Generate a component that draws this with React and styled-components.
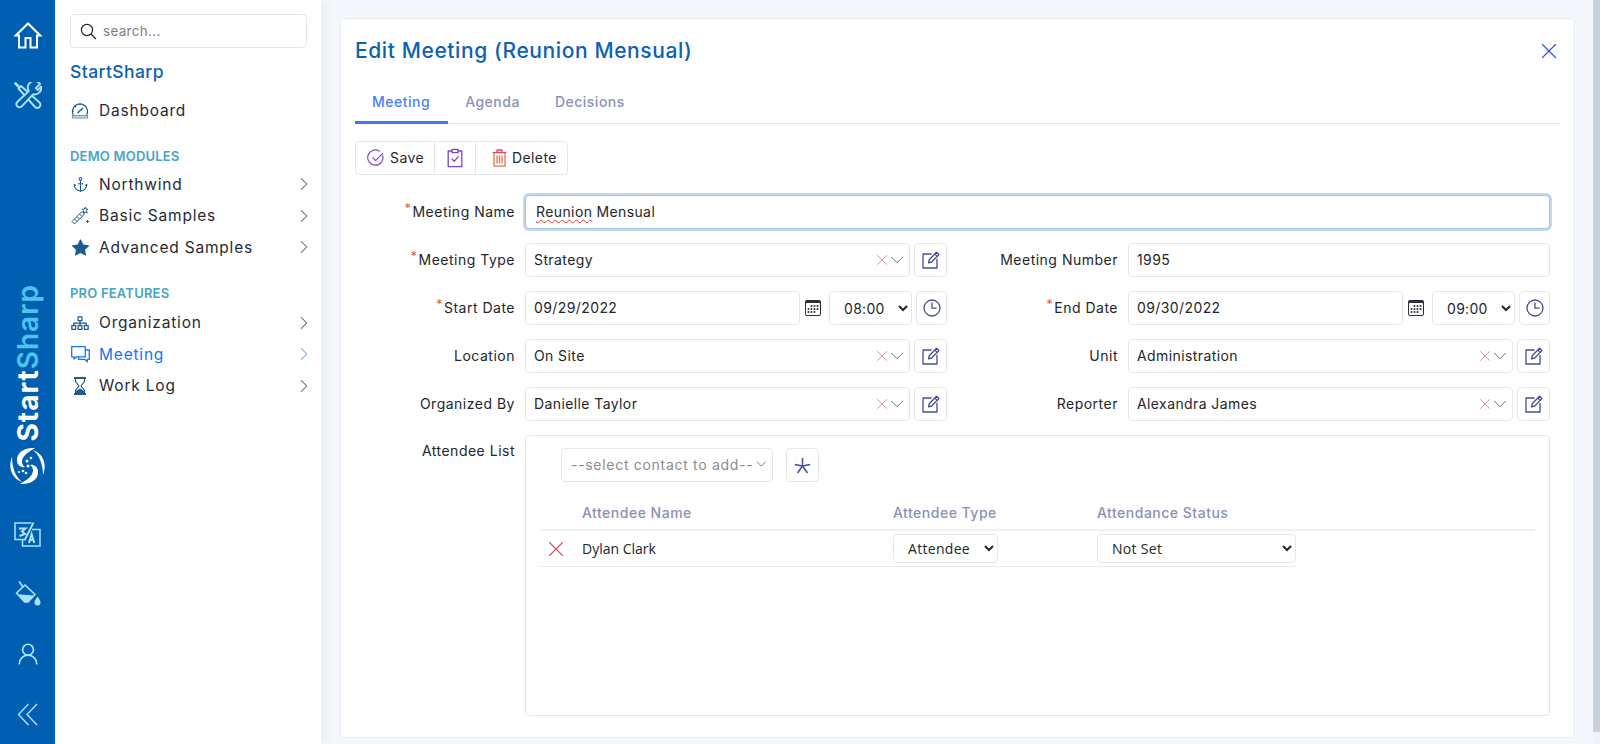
import React from 'react';
import styled, { createGlobalStyle } from 'styled-components';
import { ChevronRight, ChevronDown, X, Anchor, UserRound } from 'lucide-react';
import { BsStarFill, BsCalendar3 } from 'react-icons/bs';
import { LiaSitemapSolid } from 'react-icons/lia';

const GlobalStyle = createGlobalStyle`
  html, body {
    margin: 0;
    height: 100%;
    overflow: hidden;
    background: #f4f7fb;
  }
  * { box-sizing: border-box; }
  body {
    font-family: Inter, "Noto Sans", sans-serif;
    font-size: 14px;
    color: #22262e;
  }
`;

const Page = styled.div`
  display: flex;
  height: 744px;
  width: 1600px;
`;

/* left icon rail */
const Rail = styled.nav`
  width: 55px;
  flex: none;
  background: #005fb0;
  display: flex;
  flex-direction: column;
  align-items: center;
  color: #a9e2fb;
`;

const RailIcon = styled.div`
  height: 60px;
  width: 55px;
  flex: none;
  display: flex;
  align-items: center;
  justify-content: center;
  color: ${p => (p.$white ? '#fff' : '#a9e2fb')};
`;

const RailTop = styled.div`
  padding-top: 5px;
  display: flex;
  flex-direction: column;
`;

const Brand = styled.div`
  flex: 1;
  display: flex;
  flex-direction: column;
  align-items: center;
  justify-content: flex-end;
  gap: 6px;
  padding-bottom: 19px;
`;

const BrandText = styled.div`
  writing-mode: vertical-rl;
  transform: rotate(180deg);
  font-size: 28px;
  font-weight: 700;
  color: #fff;
  letter-spacing: 1px;
  line-height: 1;

  span {
    color: #4dc4ef;
    font-weight: 600;
  }
`;

const RailBottom = styled.div`
  display: flex;
  flex-direction: column;
`;

/* side menu */
const Sidebar = styled.aside`
  width: 266px;
  flex: none;
  background: #fff;
  padding: 14px 14px 0 15px;
  box-shadow: 4px 0 10px rgba(70, 100, 140, 0.07);
  position: relative;
`;

const SearchBox = styled.div`
  height: 34px;
  width: 237px;
  border: 1px solid #e3e5ea;
  border-radius: 4px;
  display: flex;
  align-items: center;
  gap: 6px;
  padding: 0 9px;
  color: #7d8087;
  font-size: 13.5px;
  letter-spacing: 0.3px;
`;

const AppName = styled.div`
  font-size: 17.5px;
  font-weight: 500;
  color: #0b62b1;
  margin-top: 14px;
  line-height: 20px;
  letter-spacing: 0.4px;
`;

const SectionTitle = styled.div`
  font-size: 13px;
  font-weight: 600;
  color: #46a5c0;
  line-height: 16px;
  margin-top: ${p => p.$top}px;
  margin-bottom: ${p => p.$bottom}px;
  letter-spacing: 0.2px;
`;

const MenuItem = styled.div`
  height: 31.5px;
  display: flex;
  align-items: center;
  gap: 9px;
  font-size: 15.5px;
  letter-spacing: 0.8px;
  color: ${p => (p.$active ? '#1a74f0' : '#272b33')};
`;

const DashboardItem = styled(MenuItem)`
  margin-top: 13px;
`;

const MenuIcon = styled.span`
  width: 20px;
  display: flex;
  justify-content: center;
  flex: none;
  color: ${p => (p.$active ? '#1a74f0' : '#1c5c92')};
`;

const MenuLabel = styled.span`
  flex: 1;
`;

const MenuChevron = styled(ChevronRight)`
  color: ${p => (p.$active ? '#6d97ec' : '#4f5863')};
  margin-right: -8px;
`;

/* main area */
const Main = styled.main`
  flex: 1;
  min-width: 0;
  padding: 18px 18px 6px 19px;
  display: flex;
`;

const Card = styled.section`
  flex: 1;
  background: #fff;
  border: 1px solid #e8ebef;
  border-radius: 4px;
  padding: 0 13px 0 14px;
  display: flex;
  flex-direction: column;
`;

const ScrollTrack = styled.div`
  width: 7px;
  flex: none;
  background: #eef1f5;
`;

const ScrollThumb = styled.div`
  height: 732px;
  background: #c8d0da;
`;

const CardHeader = styled.header`
  height: 66px;
  padding-bottom: 3px;
  display: flex;
  align-items: center;
  justify-content: space-between;
  flex: none;
`;

const Title = styled.h1`
  margin: 0;
  font-size: 21px;
  font-weight: 500;
  color: #0b62b1;
  letter-spacing: 0.6px;
`;

const CloseIcon = styled(X)`
  color: #2f56d6;
  margin-right: -1px;
`;

const Tabs = styled.div`
  display: flex;
  border-bottom: 1px solid #e5e7eb;
  height: 39px;
  flex: none;
`;

const Tab = styled.div`
  padding: 0 18px ${p => (p.$active ? '4px' : '7px')} 17px;
  height: 39px;
  display: flex;
  align-items: center;
  font-size: 14px;
  font-weight: 500;
  letter-spacing: 0.5px;
  color: ${p => (p.$active ? '#4d7ef7' : '#8c90b8')};
  border-bottom: ${p => (p.$active ? '3px solid #4076f6' : '0')};
  margin-bottom: -1px;
`;

const Toolbar = styled.div`
  margin-top: 17px;
  height: 34px;
  display: inline-flex;
  align-self: flex-start;
  border: 1px solid #e5e7eb;
  border-radius: 4px;
  flex: none;
`;

const ToolButton = styled.div`
  display: flex;
  align-items: center;
  gap: 5px;
  height: 100%;
  padding: ${p => p.$pad};
  letter-spacing: 0.4px;
  color: #26282d;
  & + & { border-left: 1px solid #e5e7eb; }
`;

const ToolText = styled.span`
  position: relative;
  top: -1px;
`;

const Form = styled.div`
  margin-top: 20px;
  flex: 1;
  display: flex;
  flex-direction: column;
  gap: 14px;
  margin-right: 11px;
`;

const Row = styled.div`
  display: flex;
  align-items: center;
  height: 34px;
`;

const AttendeeFormRow = styled.div`
  display: flex;
  align-items: flex-start;
  height: 281px;
`;

const Col = styled.div`
  display: flex;
  align-items: center;
  flex: none;
  width: ${p => p.$w}px;
  height: 100%;
`;

const Label = styled.label`
  width: ${p => p.$w}px;
  flex: none;
  text-align: right;
  padding-right: 10px;
  padding-top: ${p => p.$top || 0}px;
  padding-bottom: 2px;
  letter-spacing: 0.5px;
  color: #23262c;
  white-space: nowrap;

  i {
    color: #e0604f;
    font-style: normal;
    font-size: 13px;
    position: relative;
    top: -4px;
    margin-right: 1px;
  }
`;

const Field = styled.div`
  flex: 1;
  min-width: 0;
  height: 100%;
  border: 1px solid #e5e7eb;
  border-radius: 4px;
  padding: 0 8px 2px;
  display: flex;
  align-items: center;
  letter-spacing: 0.4px;
  color: #23262c;
  background: #fff;
`;

const FocusField = styled(Field)`
  border-color: #a9bfe2;
  box-shadow: 0 0 0 2px #c6d6f0;
  padding-left: 10px;
`;

const Squiggle = styled.span`
  text-decoration: underline wavy #e0362c 1px;
  text-underline-offset: 2px;
  margin-right: 4px;
`;

const Clear = styled(X)`
  color: #c0766f;
  margin-left: auto;
  position: relative;
  top: 1px;
`;

const Caret = styled(ChevronDown)`
  color: #5b6270;
  margin-left: -5px;
  margin-right: -7px;
  position: relative;
  top: 1px;
`;

const SquareButton = styled.div`
  width: ${p => p.$w || 33}px;
  height: 100%;
  flex: none;
  margin-left: ${p => p.$ml || 4}px;
  border: 1px solid #e5e7eb;
  border-radius: 4px;
  display: flex;
  align-items: center;
  justify-content: center;
  color: #464c9b;
`;

const CalendarSlot = styled.div`
  width: 29px;
  flex: none;
  display: flex;
  justify-content: center;
  padding-right: 3px;
  color: #2a2f38;
`;

const NativeSelect = styled.select`
  font: inherit;
  letter-spacing: 0.3px;
  color: #23262c;
  background: #fff;
  border: 1px solid #e5e7eb;
  border-radius: 4px;
  outline: none;
  height: ${p => p.$h || 34}px;
  width: ${p => p.$w}px;
  flex: none;
  padding: 0 4px 0 10px;
`;

const Attendees = styled.div`
  flex: 1;
  height: 281px;
  border: 1px solid #e5e7eb;
  border-radius: 4px;
  padding: 12px 14px 0 14px;
`;

const AddRow = styled.div`
  height: 34px;
  display: flex;
  align-items: center;
  margin-left: 21px;
`;

const ContactPicker = styled.div`
  width: 212px;
  height: 100%;
  border: 1px solid #e5e7eb;
  border-radius: 4px;
  display: flex;
  align-items: center;
  padding: 0 2px 2px 9px;
  color: #8a8d93;
  letter-spacing: 0.7px;
  white-space: nowrap;
  justify-content: space-between;
`;

const AttendeeHead = styled.div`
  display: grid;
  grid-template-columns: 42px 311px 204px 1fr;
  margin-top: 22px;
  height: 27px;
  border-bottom: 2px solid #edf0f4;
  font-weight: 500;
  letter-spacing: 0.5px;
  color: #8b8fb8;
  align-items: start;
  line-height: 18px;
`;

const AttendeeRow = styled.div`
  display: grid;
  grid-template-columns: 42px 311px 204px 199px;
  width: 756px;
  height: 36px;
  border-bottom: 1px solid #e8ebef;
  align-items: center;
  font-family: "Open Sans", sans-serif;
  font-size: 14px;
`;

const RemoveCell = styled.div`
  display: flex;
  padding-left: 3px;
  color: #dc4c5e;
`;

/* icons drawn by hand so their strokes follow the picture */
const HomeIcon = () => (
  <svg width="28" height="27" viewBox="0 0 28 27" fill="none" stroke="currentColor" strokeWidth="2" strokeLinejoin="miter">
    <path d="M14 1.500L1.800 13.500H5V25.500H11.500V16H16.500V25.500H23V13.500H26.200Z" />
  </svg>
);

const ToolsIcon = () => (
  <svg width="28" height="27" viewBox="0 0 28 27" fill="none" stroke="currentColor" strokeWidth="1.900" strokeLinejoin="round" strokeLinecap="round">
    <path d="M1.500 1.500L4.500 4.500" strokeWidth="2.600" />
    <path d="M4.500 6.500L7 4L25.500 20.500A3 3 0 0 1 21 25Z" />
    <path fill="#005fb0" d="M26 2L21.800 6.200L23.800 8.200L27 4.500A6.500 6.500 0 0 1 19 12.300L8 24.200A3.100 3.100 0 0 1 3.300 20L14.800 9A6.500 6.500 0 0 1 26 2Z" />
  </svg>
);

const TranslateIcon = () => (
  <svg width="27" height="25" viewBox="0 0 27 25" fill="none" stroke="currentColor" strokeWidth="1.500">
    <path d="M10 17.500H1V1H17.500" />
    <path d="M18 7.500H26V24H8.500V18" />
    <path d="M19.500 .5L10.500 18.500" strokeWidth="1.800" />
    <path d="M5 6.500h6.500l-3.500 3 3 2.500-5.500 2" strokeWidth="2" />
    <path d="M15 21l2.600-9 2.600 9M16 18h3.400" strokeWidth="2" />
  </svg>
);

const PaintIcon = () => (
  <svg width="26" height="26" viewBox="0 0 26 26" fill="none" stroke="currentColor" strokeWidth="1.700" strokeLinejoin="round">
    <path d="M1.500 12L10 4L20 13.500L13 20.800H9.500Z" />
    <path d="M7.800 5.800L4.500 1" strokeLinecap="round" />
    <path fill="currentColor" stroke="none" d="M3 13.200L19 14.500L12.700 20.800H9.800Z" />
    <path fill="currentColor" stroke="none" d="M22.500 15.500C20.500 18.500 19.500 20 19.500 21.500A3 3 0 0 0 25.500 21.500C25.500 20 24.500 18.500 22.500 15.500Z" />
  </svg>
);

const ChevronsIcon = () => (
  <svg width="21" height="23" viewBox="0 0 21 23" fill="none" stroke="currentColor" strokeWidth="1.400">
    <path d="M11.500 1L1.500 11.500L11.500 22" />
    <path d="M20 1L10 11.500L20 22" />
  </svg>
);

const LogoIcon = () => (
  <svg width="37" height="38" viewBox="0 0 37 38" fill="#fff">
    <path d="M26 1C15 0 7 6 8 14C8.500 19 13 21 16 20C13 18 12 14 14 11C16 7 21 4 26 1Z" />
    <path d="M11 37C22 38 30 32 29 24C28.500 19 24 17 21 18C24 20 25 24 23 27C21 31 16 34 11 37Z" />
    <path d="M3 10C-1 20 2 31 13 35C8 31 3 23 3 10Z" />
    <path d="M34 28C38 18 35 7 24 3C29 7 34 15 34 28Z" />
    <circle cx="22" cy="11" r="1.300" /><circle cx="18" cy="14" r="1.500" /><circle cx="19" cy="19" r="1.500" />
    <circle cx="14" cy="24" r="1.300" /><circle cx="10" cy="25" r="1.100" /><circle cx="17" cy="26" r="1.300" />
  </svg>
);

const GaugeIcon = () => (
  <svg width="18" height="17" viewBox="0 0 18 17" fill="none" stroke="currentColor" strokeWidth="1.200">
    <path d="M2.500 13.500A7.600 7.600 0 1 1 15.500 13.500" />
    <path d="M6.500 11L12 6" strokeWidth="1.500" />
    <path d="M4 3.800L5 5M9 1.800V3.300M1.600 9H3" />
    <path d="M1.500 13.500H16.500V16H1.500Z" fill="#c5d3e0" stroke="#7c9ab6" />
  </svg>
);

const WandIcon = () => (
  <svg width="19" height="19" viewBox="0 0 19 19" fill="none" stroke="currentColor" strokeWidth="1" strokeLinejoin="round">
    <path d="M1 15.500L11 5.500L13.500 8L3.500 18Z" />
    <path d="M3.500 13L6 15.500M6 10.500L8.500 13M8.500 8L11 10.500" />
    <path d="M14.500 1L15 3L17 3.200L15.500 4.700L16.200 7L14.200 6L12.500 7L12.800 4.800L11.200 3.300L13.400 3Z" />
    <path d="M16.500 14V17M15 15.500H18" />
  </svg>
);

const ChatIcon = () => (
  <svg width="19" height="17" viewBox="0 0 19 17" fill="none" stroke="currentColor" strokeWidth="1.300" strokeLinejoin="round">
    <path d="M.7.700H14.300V10.800H5.500L3 13V10.800H.7Z" />
    <path d="M14.300 4H18.300V13.300H16.300V15.800L13.800 13.300H7.500V10.800" />
  </svg>
);

const HourglassIcon = () => (
  <svg width="14" height="18" viewBox="0 0 14 18" fill="none" stroke="currentColor" strokeWidth="1.100">
    <path d="M1 1H13M1 17H13" strokeWidth="1.800" />
    <path d="M2.500 1V4.500L6 9L2.500 13.500V17M11.500 1V4.500L8 9L11.500 13.500V17" />
    <path d="M3 17V14L7 11.500L11 14V17Z" fill="currentColor" stroke="none" />
  </svg>
);

const SearchIcon = () => (
  <svg width="17" height="17" viewBox="0 0 17 17" fill="none" stroke="#23262c" strokeWidth="1.200">
    <circle cx="7" cy="7" r="5.600" />
    <path d="M11 11l5 5" />
  </svg>
);

const SaveIcon = () => (
  <svg width="18" height="18" viewBox="0 0 18 18" fill="none" stroke="#7b4fc4" strokeWidth="1.200" strokeLinecap="round" strokeLinejoin="round">
    <path d="M15.600 6.400A7.600 7.600 0 1 1 12.400 2.200" />
    <path d="M5.800 8.600l2.800 3 7-7.200" />
  </svg>
);

const ClipboardIcon = () => (
  <svg width="16" height="20" viewBox="0 0 16 20" fill="none" stroke="#7a45c8" strokeWidth="1.300" strokeLinejoin="round" strokeLinecap="round">
    <path d="M5 3H1.200v15.600h13.600V3H11" />
    <path d="M5 1.400h6v3.200H5z" />
    <path d="M5 11l2.200 2.300L11.200 8.600" />
  </svg>
);

const TrashIcon = () => (
  <svg width="15" height="18" viewBox="0 0 15 18" fill="none" strokeWidth="1.300" strokeLinejoin="round">
    <path stroke="#e5455b" d="M.6 3.600h13.800M5 3.600V1h5v2.600" />
    <path stroke="#e8705a" d="M2 3.600v13.600h11V3.600" />
    <path stroke="#e8705a" d="M5 6.600v7.800M7.500 6.600v7.800M10 6.600v7.800" />
  </svg>
);

const EditIcon = () => (
  <svg width="18" height="18" viewBox="0 0 18 18" fill="none" stroke="#464c9b" strokeWidth="1.300" strokeLinejoin="round">
    <path d="M9.500 3H1v14h14V8" />
    <path d="M6.500 11.800l.8-3.300L14.600 1.200l2.400 2.400-7.300 7.400z" />
    <path d="M12.800 3l2.400 2.400" />
  </svg>
);

const ClockIcon = () => (
  <svg width="18" height="18" viewBox="0 0 18 18" fill="none" stroke="#464c9b" strokeWidth="1.300" strokeLinecap="round">
    <circle cx="9" cy="9" r="8" />
    <path d="M9 4v5.200h4.200" />
  </svg>
);

const StarburstIcon = () => (
  <svg width="17" height="17" viewBox="0 0 17 17" fill="none" stroke="#464c9b" strokeWidth="1.500">
    <path d="M8.500 9V1M8.500 9L.8 7.500M8.500 9L16.200 7.500M8.500 9L3.500 16M8.500 9L13.500 16" />
  </svg>
);

const menuBlocks = [
  { title: 'DEMO MODULES', top: 21, bottom: 5, items: [
    { label: 'Northwind', icon: <Anchor size={17} strokeWidth={1.5} /> },
    { label: 'Basic Samples', icon: <WandIcon /> },
    { label: 'Advanced Samples', icon: <BsStarFill size={17} /> },
  ] },
  { title: 'PRO FEATURES', top: 22, bottom: 6, items: [
    { label: 'Organization', icon: <LiaSitemapSolid size={20} /> },
    { label: 'Meeting', icon: <ChatIcon />, active: true },
    { label: 'Work Log', icon: <HourglassIcon /> },
  ] },
];

const Lookup = ({ value }) => (
  <>
    <Field>
      {value}
      <Clear size={18} strokeWidth={1} />
      <Caret size={22} strokeWidth={1} />
    </Field>
    <SquareButton><EditIcon /></SquareButton>
  </>
);

const DateTime = ({ date, time }) => (
  <>
    <Field>{date}</Field>
    <CalendarSlot><BsCalendar3 size={16} /></CalendarSlot>
    <NativeSelect $w={83} defaultValue={time}>
      <option>{time}</option>
    </NativeSelect>
    <SquareButton $w={31}><ClockIcon /></SquareButton>
  </>
);

export default function App() {
  return (
    <Page>
      <GlobalStyle />
      <Rail>
        <RailTop>
          <RailIcon $white><HomeIcon /></RailIcon>
          <RailIcon><ToolsIcon /></RailIcon>
        </RailTop>
        <Brand>
          <BrandText>Start<span>Sharp</span></BrandText>
          <LogoIcon />
        </Brand>
        <RailBottom>
          <RailIcon><TranslateIcon /></RailIcon>
          <RailIcon><PaintIcon /></RailIcon>
          <RailIcon><UserRound size={26} strokeWidth={1.6} /></RailIcon>
          <RailIcon><ChevronsIcon /></RailIcon>
        </RailBottom>
      </Rail>
      <Sidebar>
        <SearchBox>
          <SearchIcon />
          search...
        </SearchBox>
        <AppName>StartSharp</AppName>
        <DashboardItem>
          <MenuIcon><GaugeIcon /></MenuIcon>
          <MenuLabel>Dashboard</MenuLabel>
        </DashboardItem>
        {menuBlocks.map(block => (
          <div key={block.title}>
            <SectionTitle $top={block.top} $bottom={block.bottom}>{block.title}</SectionTitle>
            {block.items.map(item => (
              <MenuItem key={item.label} $active={item.active}>
                <MenuIcon $active={item.active}>{item.icon}</MenuIcon>
                <MenuLabel>{item.label}</MenuLabel>
                <MenuChevron $active={item.active} size={22} strokeWidth={1.1} />
              </MenuItem>
            ))}
          </div>
        ))}
      </Sidebar>
      <Main>
        <Card>
          <CardHeader>
            <Title>Edit Meeting (Reunion Mensual)</Title>
            <CloseIcon size={26} strokeWidth={1.1} />
          </CardHeader>
          <Tabs>
            <Tab $active>Meeting</Tab>
            <Tab>Agenda</Tab>
            <Tab>Decisions</Tab>
          </Tabs>
          <Toolbar>
            <ToolButton $pad="0 10px 0 11px"><SaveIcon /><ToolText>Save</ToolText></ToolButton>
            <ToolButton $pad="0 12px"><ClipboardIcon /></ToolButton>
            <ToolButton $pad="0 10px 0 16px"><TrashIcon /><ToolText>Delete</ToolText></ToolButton>
          </Toolbar>
          <Form>
            <Row>
              <Label $w={170}><i>*</i>Meeting Name</Label>
              <FocusField><Squiggle>Reunion</Squiggle>Mensual</FocusField>
            </Row>
            <Row>
              <Col $w={592}>
                <Label $w={170}><i>*</i>Meeting Type</Label>
                <Lookup value="Strategy" />
              </Col>
              <Col $w={603}>
                <Label $w={181}>Meeting Number</Label>
                <Field>1995</Field>
              </Col>
            </Row>
            <Row>
              <Col $w={592}>
                <Label $w={170}><i>*</i>Start Date</Label>
                <DateTime date="09/29/2022" time="08:00" />
              </Col>
              <Col $w={603}>
                <Label $w={181}><i>*</i>End Date</Label>
                <DateTime date="09/30/2022" time="09:00" />
              </Col>
            </Row>
            <Row>
              <Col $w={592}>
                <Label $w={170}>Location</Label>
                <Lookup value="On Site" />
              </Col>
              <Col $w={603}>
                <Label $w={181}>Unit</Label>
                <Lookup value="Administration" />
              </Col>
            </Row>
            <Row>
              <Col $w={592}>
                <Label $w={170}>Organized By</Label>
                <Lookup value="Danielle Taylor" />
              </Col>
              <Col $w={603}>
                <Label $w={181}>Reporter</Label>
                <Lookup value="Alexandra James" />
              </Col>
            </Row>
            <AttendeeFormRow>
              <Label $w={170} $top={7}>Attendee List</Label>
              <Attendees>
                <AddRow>
                  <ContactPicker>--select contact to add--<ChevronDown size={20} strokeWidth={1.1} color="#4f5663" /></ContactPicker>
                  <SquareButton $w={33} $ml={13}><StarburstIcon /></SquareButton>
                </AddRow>
                <AttendeeHead>
                  <span />
                  <span>Attendee Name</span>
                  <span>Attendee Type</span>
                  <span>Attendance Status</span>
                </AttendeeHead>
                <AttendeeRow>
                  <RemoveCell><X size={26} strokeWidth={1} /></RemoveCell>
                  <span>Dylan Clark</span>
                  <NativeSelect $w={105} $h={29} defaultValue="Attendee"><option>Attendee</option></NativeSelect>
                  <NativeSelect $w={199} $h={29} defaultValue="Not Set"><option>Not Set</option></NativeSelect>
                </AttendeeRow>
              </Attendees>
            </AttendeeFormRow>
          </Form>
        </Card>
      </Main>
      <ScrollTrack><ScrollThumb /></ScrollTrack>
    </Page>
  );
}
